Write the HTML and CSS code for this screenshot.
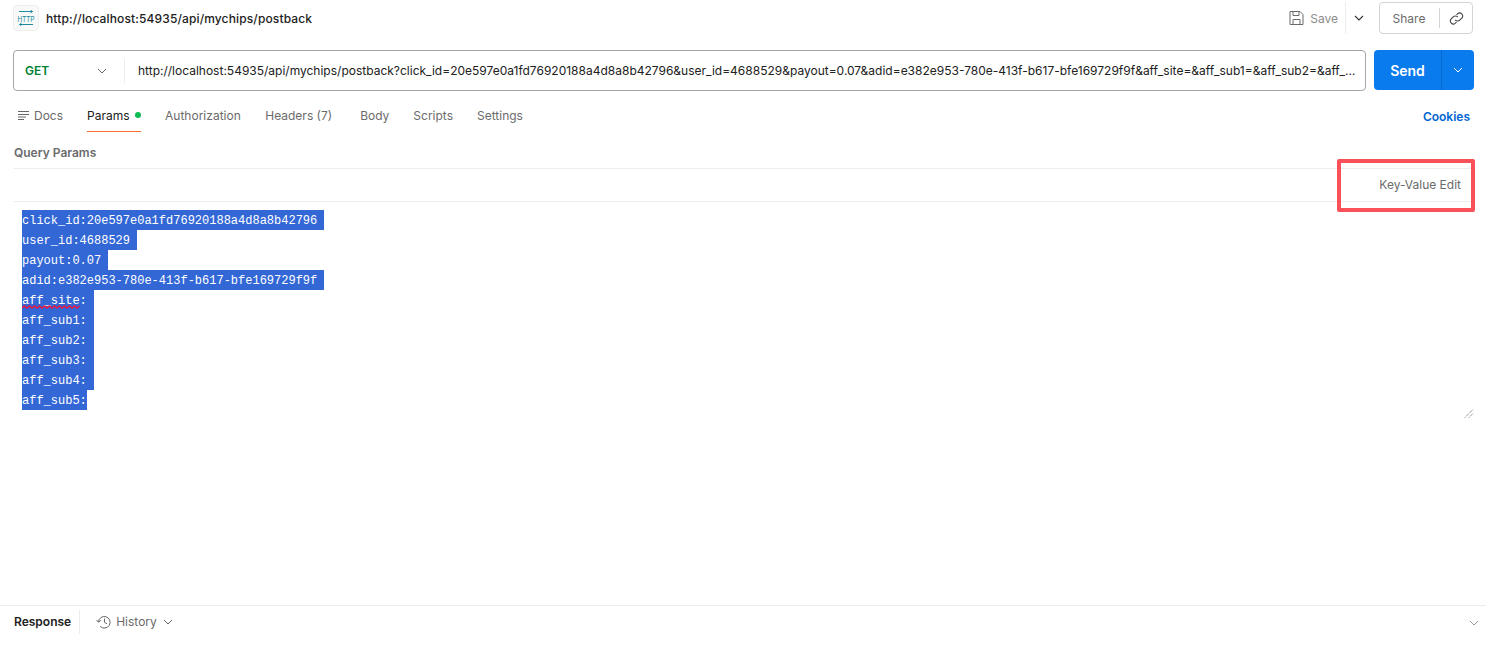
FILE: index.html
```html
<!DOCTYPE html>
<html lang="en">
<head>
<meta charset="utf-8">
<title>Postman request</title>
<link rel="stylesheet" href="styles.css">
</head>
<body>
<div class="app">
  <header class="titlebar">
    <div class="title-left">
      <span class="http-icon">
        <svg width="18" height="16" viewBox="0 0 18 16" fill="none" stroke="#1f8a9e" stroke-width="1">
          <path d="M2 1.500H15.500M13.500 0L15.500 1.500L13.500 3"/>
          <path d="M16 14.500H2.500M4.500 13L2.500 14.500L4.500 16"/>
          <text transform="translate(9 11.500) scale(.72 1)" text-anchor="middle" class="http-text">HTTP</text>
        </svg>
      </span>
      <span class="req-name">http://localhost:54935/api/mychips/postback</span>
    </div>
    <div class="title-right">
      <svg class="save-icon" width="15" height="16" viewBox="0 0 15 16" fill="none" stroke="#6b6b6b" stroke-width="1">
        <path d="M1 1.500H11L14 4.500V14.500H1Z"/>
        <path d="M4 1.500V5.500H10V1.500M4 14.500V9.500H11V14.500"/>
      </svg>
      <span class="save-label">Save</span>
      <span class="save-drop">
        <svg width="10" height="6" viewBox="0 0 10 6" fill="none" stroke="#333" stroke-width="1.100"><path d="M1 1L5 5L9 1"/></svg>
      </span>
      <div class="share">
        <span class="share-label">Share</span>
        <span class="share-link">
          <svg width="15" height="15" viewBox="0 0 15 15" fill="none" stroke="#444" stroke-width="1.100">
            <path d="M6.200 8.800a3 3 0 0 0 4.500.3l2.300-2.300a3 3 0 0 0-4.200-4.200L7.500 3.900"/>
            <path d="M8.800 6.200a3 3 0 0 0-4.500-.3L2 8.200a3 3 0 0 0 4.200 4.200l1.300-1.300"/>
          </svg>
        </span>
      </div>
    </div>
  </header>

  <section class="url-row">
    <div class="url-box">
      <div class="method">
        <span class="method-name">GET</span>
        <svg width="10" height="6" viewBox="0 0 10 6" fill="none" stroke="#666" stroke-width="1"><path d="M1 1L5 5L9 1"/></svg>
      </div>
      <div class="url-text">http://localhost:54935/api/mychips/postback?click_id=20e597e0a1fd76920188a4d8a8b42796&amp;user_id=4688529&amp;payout=0.07&amp;adid=e382e953-780e-413f-b617-bfe169729f9f&amp;aff_site=&amp;aff_sub1=&amp;aff_sub2=&amp;aff_sub3=&amp;aff_sub4=&amp;aff_sub5=</div>
    </div>
    <div class="send">
      <span class="send-label">Send</span>
      <span class="send-drop">
        <svg width="10" height="6" viewBox="0 0 10 6" fill="none" stroke="#fff" stroke-width="1"><path d="M1 1L5 5L9 1"/></svg>
      </span>
    </div>
  </section>

  <nav class="tabs">
    <div class="tab-list">
      <span class="tab tab-docs">
        <svg width="11" height="9" viewBox="0 0 11 9" fill="none" stroke="#666" stroke-width="1"><path d="M0 .5H11M0 3.500H11M0 6H8M0 8.500H6"/></svg>
        Docs
      </span>
      <span class="tab tab-active">Params<i class="dot"></i></span>
      <span class="tab">Authorization</span>
      <span class="tab tab-headers">Headers (7)</span>
      <span class="tab">Body</span>
      <span class="tab">Scripts</span>
      <span class="tab">Settings</span>
    </div>
    <span class="cookies">Cookies</span>
  </nav>

  <main class="params">
    <h2 class="params-title">Query Params</h2>
    <div class="params-head"><span class="kv-edit">Key-Value Edit</span></div>
    <div class="editor">
      <div class="bulk">
        <span class="line">click_id:20e597e0a1fd76920188a4d8a8b42796</span>
        <span class="line">user_id:4688529</span>
        <span class="line">payout:0.07</span>
        <span class="line">adid:e382e953-780e-413f-b617-bfe169729f9f</span>
        <span class="line line-flagged">aff_site:<svg class="squiggle" width="58" height="4" viewBox="0 0 58 4" fill="none" stroke="#ee1440" stroke-width="1.400"><path d="M0 3L2.500 1L5 3L7.500 1L10 3L12.500 1L15 3L17.500 1L20 3L22.500 1L25 3L27.500 1L30 3L32.500 1L35 3L37.500 1L40 3L42.500 1L45 3L47.500 1L50 3L52.500 1L55 3L57.500 1"/></svg></span>
        <span class="line">aff_sub1:</span>
        <span class="line">aff_sub2:</span>
        <span class="line">aff_sub3:</span>
        <span class="line">aff_sub4:</span>
        <span class="line line-last">aff_sub5:</span>
      </div>
      <svg class="resizer" width="10" height="10" viewBox="0 0 10 10" fill="none" stroke="#555" stroke-width="1" stroke-dasharray="1 1"><path d="M1 9.500L9.500 1M5 9.500L9.500 5"/></svg>
    </div>
    <div class="annotation"></div>
  </main>

  <footer class="footer">
    <span class="resp">Response</span>
    <span class="history">
      <svg width="16" height="14" viewBox="0 0 16 14" fill="none" stroke="#666" stroke-width="1"><path d="M2.500 7a5.800 5.800 0 1 1 1.700 4.400"/><path d="M.5 5L2.500 7.200L4.800 5.200"/><path d="M8.500 3.500V7.300L11 8.800"/></svg>
      History
      <svg class="hist-chev" width="10" height="6" viewBox="0 0 10 6" fill="none" stroke="#666" stroke-width="1"><path d="M1 1L5 5L9 1"/></svg>
    </span>
    <svg class="foot-chev" width="10" height="6" viewBox="0 0 10 6" fill="none" stroke="#999" stroke-width="1"><path d="M1 1L5 5L9 1"/></svg>
  </footer>
</div>
</body>
</html>
```
FILE: styles.css
```css
* { box-sizing: border-box; }
html, body { margin: 0; padding: 0; background: #fff; }
body { font-family: Inter, "Liberation Sans", sans-serif; font-size: 12px; color: #6b6b6b; overflow: hidden; }
.app { height: 666px; display: flex; flex-direction: column; }

.titlebar { height: 36px; display: flex; justify-content: space-between; align-items: center; padding: 0 13px 0 13px; flex: none; }
.title-left { display: flex; align-items: center; gap: 7px; }
.http-icon { width: 26px; height: 26px; border: 1px solid #eee; border-radius: 4px; background: #f9f9f9; display: flex; align-items: center; justify-content: center; }
.http-text { font-family: "Liberation Sans", sans-serif; font-size: 9px; fill: #1f8a9e; stroke: none; }
.req-name { font-weight: 500; letter-spacing: .13px; color: #212121; font-size: 12px; }
.title-right { display: flex; align-items: center; }
.save-icon { margin-right: 6px; }
.save-label { color: #8c8c8c; padding-right: 7px; }
.save-drop { height: 32px; width: 27px; border-left: 1px solid #ededed; display: flex; align-items: center; justify-content: center; margin-right: 7px; }
.share { width: 94px; height: 32px; border: 1px solid #d4d4d4; border-radius: 4px; display: flex; align-items: center; }
.share-label { width: 59px; padding-right: 1px; text-align: center; color: #6b6b6b; }
.share-link { flex: 1; height: 20px; border-left: 1px solid #d4d4d4; display: flex; align-items: center; justify-content: center; }

.url-row { display: flex; gap: 8px; padding: 14px 12px 0 13px; flex: none; height: 55px; }
.url-box { flex: 1; min-width: 0; height: 41px; border: 1px solid #a6a6a6; border-radius: 4px; display: flex; align-items: center; }
.method { width: 111px; height: 24px; padding: 0 17px 0 11px; border-right: 1px solid #ededed; display: flex; align-items: center; justify-content: space-between; flex: none; }
.method-name { color: #007f31; font-weight: 600; font-size: 12px; }
.url-text { flex: 1; min-width: 0; padding: 0 7px 0 13px; color: #212121; font-size: 12px; white-space: nowrap; overflow: hidden; text-overflow: ellipsis; }
.send { width: 100px; height: 40px; background: #097bed; border-radius: 4px; display: flex; align-items: center; color: #fff; flex: none; }
.send-label { width: 67px; text-align: center; font-weight: 600; font-size: 14px; }
.send-drop { flex: 1; height: 100%; border-left: 1px solid #0768cb; display: flex; align-items: center; justify-content: center; }

.tabs { display: flex; justify-content: space-between; align-items: flex-start; height: 42px; padding: 0 16px 0 18px; flex: none; }
.tab-list { display: flex; gap: 24px; }
.tab { height: 41px; padding-top: 17px; line-height: 15px; color: #6b6b6b; display: inline-flex; align-items: flex-start; }
.tab-docs svg { margin: 3px 5px 0 0; }
.tab-headers { margin: 0 4px 0 .5px; }
.tab-active { color: #212121; position: relative; }
.tab-active::after { content: ""; position: absolute; left: 0; right: 0; bottom: 0; height: 1px; background: #ff6c37; }
.dot { width: 6px; height: 6px; border-radius: 50%; background: #0cbb52; margin: 4px 0 0 5.500px; }
.cookies { color: #0265d2; font-weight: 600; padding-top: 18px; line-height: 15px; }

.params { flex: 1; position: relative; padding: 0 12px 0 14px; }
.params-title { margin: 0; height: 35px; padding-top: 12px; font-size: 12px; line-height: 15px; font-weight: 600; color: #6b6b6b; }
.params-head { height: 34px; border-top: 1px solid #ededed; border-bottom: 1px solid #ededed; display: flex; justify-content: flex-end; align-items: center; padding: 0 13px 2px 0; }
.kv-edit { color: #6b6b6b; font-size: 12px; }
.editor { position: relative; height: 216px; padding: 8px 0 0 8px; }
.bulk { font-family: "Liberation Mono", monospace; font-size: 12px; line-height: 18px; color: #fff; }
.line { display: block; width: fit-content; background: #3367d6; padding: 2px 7.200px 0 0; }
.line-flagged { position: relative; }
.line-last { padding-right: 0; }
.squiggle { position: absolute; left: 0; top: 15px; }
.resizer { position: absolute; right: 0; bottom: 0; }
.annotation { position: absolute; left: 1337px; top: 26px; width: 138px; height: 53px; border: 4px solid #f95157; border-radius: 2px; }

.footer { height: 61px; border-top: 1px solid #ededed; padding: 4px 7px 0 14px; display: flex; align-items: flex-start; flex: none; }
.resp { font-weight: 600; color: #212121; line-height: 24px; padding-right: 8px; border-right: 1px solid #ededed; }
.history { display: inline-flex; align-items: center; gap: 4px; line-height: 24px; margin-left: 16px; color: #6b6b6b; }
.hist-chev { margin-left: 2px; }
.foot-chev { margin: 10px 0 0 auto; }
```
